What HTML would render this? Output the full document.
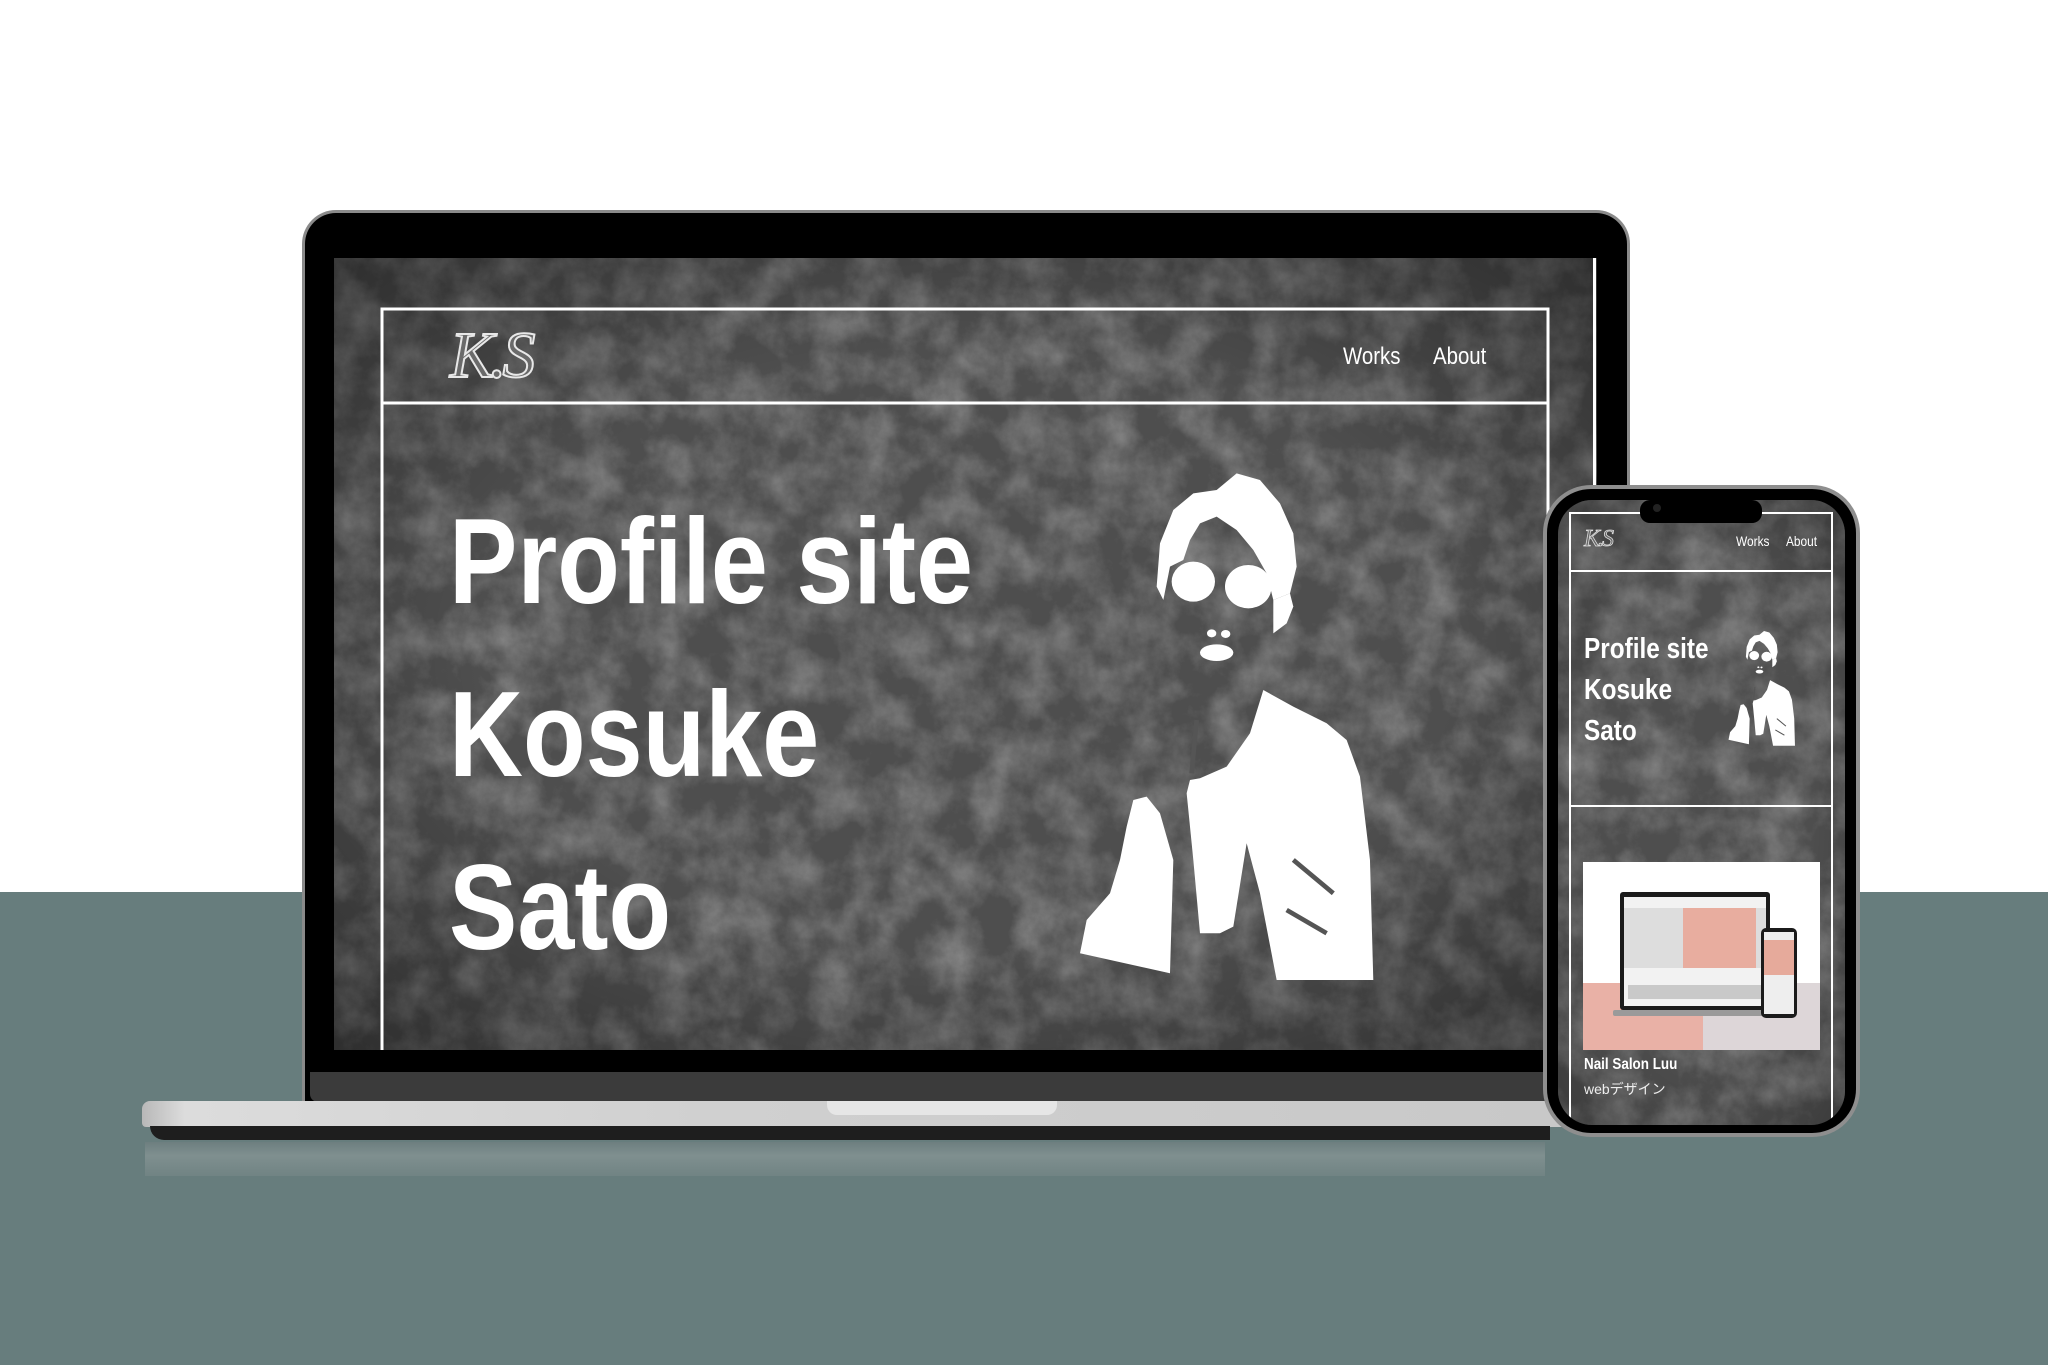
<!DOCTYPE html>
<html><head><meta charset="utf-8">
<style>
*{margin:0;padding:0;box-sizing:border-box}
body{width:2048px;height:1365px;position:relative;overflow:hidden;background:#fff;font-family:"Liberation Sans","Noto Sans CJK JP",sans-serif}
.a{position:absolute}
.t{color:#fff;font-weight:bold;white-space:nowrap;transform:scaleX(.84);transform-origin:left top;line-height:1}
</style></head><body>
<svg width="0" height="0" style="position:absolute">
<defs>
<filter id="n" x="0" y="0" width="100%" height="100%">
<feTurbulence type="fractalNoise" baseFrequency="0.025" numOctaves="6" seed="3"/>
<feColorMatrix type="matrix" values="0 0 0 0 0.45  0 0 0 0 0.45  0 0 0 0 0.45  0.9 0 0 0 -0.3"/>
</filter>
<radialGradient id="vg" cx="50%" cy="50%" r="70%"><stop offset="55%" stop-color="#000" stop-opacity="0"/><stop offset="100%" stop-color="#000" stop-opacity=".4"/></radialGradient>
<g id="fig">
<polygon fill="#fff" points="300,250 340,150 400,100 470,90 530,40 600,60 660,130 700,220 710,320 690,400 640,420 620,340 580,270 530,210 470,170 420,190 390,240 370,300 330,320 310,420 290,380"/>
<ellipse fill="#fff" cx="400" cy="365" rx="65" ry="60"/>
<ellipse fill="#fff" cx="565" cy="380" rx="70" ry="65"/>
<polygon fill="#fff" points="640,420 690,400 700,440 680,490 640,520"/>
<ellipse fill="#fff" cx="470" cy="578" rx="50" ry="25"/>
<ellipse fill="#fff" cx="455" cy="520" rx="14" ry="12"/><ellipse fill="#fff" cx="497" cy="522" rx="14" ry="12"/>
<polygon fill="#fff" points="390,960 420,955 500,920 570,820 610,690 700,740 800,790 860,840 900,950 930,1200 940,1560 650,1560 600,1300 560,1150 520,1400 480,1420 420,1420 400,1200 380,1000"/>
<polygon fill="#fff" points="220,1020 260,1010 300,1060 340,1200 330,1540 60,1480 80,1380 150,1300 180,1200 200,1100"/>
<path d="M410,780 L395,940 M700,1200 L820,1300 M680,1350 L800,1420" stroke="#555" stroke-width="14" fill="none"/>
</g>
</defs></svg>

<div class="a" style="left:0;top:892px;width:2048px;height:473px;background:#677d7d"></div>
<div class="a" style="left:145px;top:1142px;width:1400px;height:34px;background:linear-gradient(#6f7f80,#859494 40%,#738585);opacity:.8"></div>

<div class="a" style="left:302px;top:210px;width:1328px;height:895px;background:#000;border:3px solid #8a8a8a;border-bottom:none;border-radius:34px 34px 0 0"></div>
<div class="a" style="left:310px;top:1072px;width:1312px;height:30px;background:#3b3b3b;border-radius:0 0 8px 8px"></div>
<svg class="a" style="left:334px;top:258px" width="1263" height="792">
<rect width="1263" height="792" fill="#4e4e4e"/>
<rect width="1263" height="792" filter="url(#n)"/>
<rect width="1263" height="792" fill="url(#vg)"/>
<rect x="1259" y="0" width="3" height="792" fill="#fff"/>
<polyline points="48,792 48,51 1214,51 1214,792" fill="none" stroke="#fff" stroke-width="3"/>
<line x1="48" y1="145" x2="1214" y2="145" stroke="#fff" stroke-width="3"/>
<use href="#fig" transform="translate(726,202) scale(.3333)"/>
</svg>
<div class="a" style="left:450px;top:318px;font-family:'Liberation Serif',serif;font-style:italic;font-size:66px;color:#6a6a6a;-webkit-text-stroke:2px #e8e8e8;letter-spacing:-4px">K.S</div>
<div class="a" style="left:1343px;top:343px;font-size:24px;color:#fff;transform:scaleX(.85);transform-origin:left">Works</div>
<div class="a" style="left:1433px;top:343px;font-size:24px;color:#fff;transform:scaleX(.85);transform-origin:left">About</div>
<div class="a t" style="left:449px;top:500px;font-size:122px">Profile site</div>
<div class="a t" style="left:449px;top:673px;font-size:122px">Kosuke</div>
<div class="a t" style="left:449px;top:846px;font-size:122px">Sato</div>

<div class="a" style="left:142px;top:1101px;width:1420px;height:26px;background:linear-gradient(90deg,#b8b8b8,#dcdcdc 3%,#d0d0d0 40%,#c8c8c8);border-radius:8px 0 0 4px"></div>
<div class="a" style="left:827px;top:1101px;width:230px;height:14px;background:#e6e6e6;border-radius:0 0 10px 10px"></div>
<div class="a" style="left:150px;top:1126px;width:1400px;height:14px;background:#1e1e1e;border-radius:0 0 0 20px"></div>

<div class="a" style="left:1543px;top:485px;width:317px;height:652px;background:#000;border:4px solid #8e8e8e;border-radius:48px"></div>
<svg class="a" style="left:1558px;top:500px" width="287" height="625">
<defs><clipPath id="pc"><rect width="287" height="625" rx="34"/></clipPath></defs>
<g clip-path="url(#pc)">
<rect width="287" height="625" fill="#4e4e4e"/>
<rect width="287" height="625" filter="url(#n)"/>
<rect width="287" height="625" fill="url(#vg)" opacity=".6"/>
<polyline points="12,625 12,13 274,13 274,625" fill="none" stroke="#fff" stroke-width="2"/>
<line x1="12" y1="71" x2="274" y2="71" stroke="#fff" stroke-width="2"/>
<line x1="12" y1="306" x2="274" y2="306" stroke="#fff" stroke-width="2"/>
<use href="#fig" transform="translate(166,128) scale(.0755)"/>
<rect x="25" y="362" width="237" height="188" fill="#fff"/>
<rect x="25" y="483" width="120" height="67" fill="#e9b1a6"/>
<rect x="145" y="483" width="117" height="67" fill="#ddd6d8"/>
<rect x="62" y="392" width="150" height="118" rx="3" fill="#1b1b1b"/>
<rect x="66" y="397" width="142" height="109" fill="#f2f2f2"/>
<rect x="66" y="408" width="142" height="60" fill="#ddd"/>
<rect x="125" y="408" width="73" height="60" fill="#e8ad9f"/>
<rect x="70" y="485" width="134" height="14" fill="#c9c9c9"/>
<rect x="55" y="510" width="165" height="6" rx="2" fill="#9a9a9a"/>
<rect x="203" y="428" width="36" height="90" rx="5" fill="#1b1b1b"/>
<rect x="206" y="432" width="30" height="82" fill="#eee"/>
<rect x="206" y="440" width="30" height="35" fill="#e6aa9b"/>
</g>
<rect x="82" y="0" width="122" height="23" rx="10" fill="#000"/>
<circle cx="99" cy="8" r="4" fill="#222"/>
</svg>
<div class="a" style="left:1584px;top:526px;font-family:'Liberation Serif',serif;font-style:italic;font-size:24px;color:#6a6a6a;-webkit-text-stroke:.8px #ddd;letter-spacing:-2px">K.S</div>
<div class="a" style="left:1736px;top:533px;font-size:14px;color:#fff;transform:scaleX(.85);transform-origin:left">Works</div>
<div class="a" style="left:1786px;top:533px;font-size:14px;color:#fff;transform:scaleX(.85);transform-origin:left">About</div>
<div class="a t" style="left:1584px;top:635px;font-size:29px">Profile site</div>
<div class="a t" style="left:1584px;top:676px;font-size:29px">Kosuke</div>
<div class="a t" style="left:1584px;top:717px;font-size:29px">Sato</div>
<div class="a t" style="left:1584px;top:1057px;font-size:16px">Nail Salon Luu</div>
<div class="a" style="left:1584px;top:1079px;font-size:14px;color:#eee;white-space:nowrap">webデザイン</div>
</body></html>
